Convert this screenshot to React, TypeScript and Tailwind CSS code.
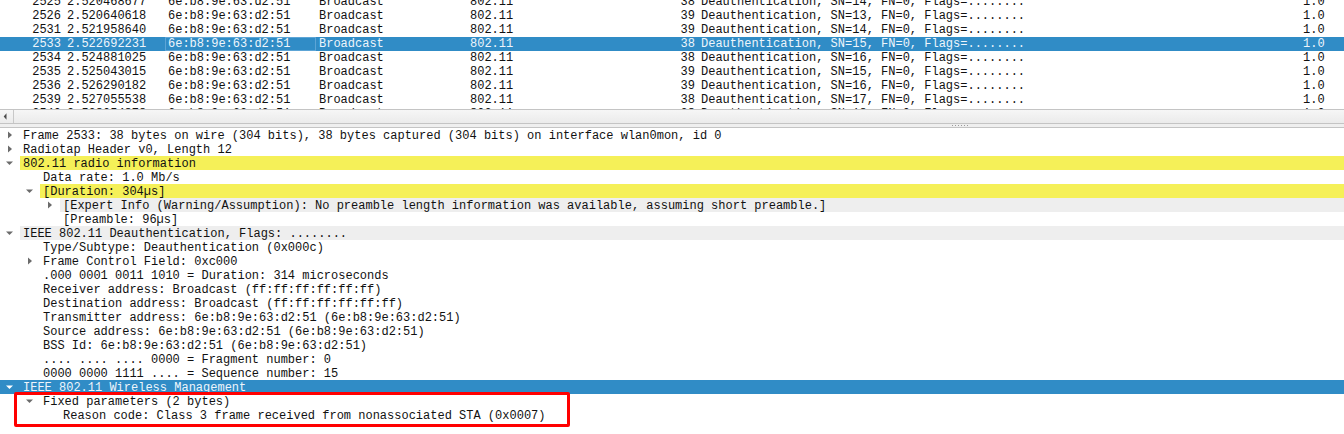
import React from "react";

type Pkt = { no: string; time: string; len: string; sn: number; sel?: boolean };

const packets: Pkt[] = [
  { no: "2525", time: "2.520468677", len: "38", sn: 14 },
  { no: "2526", time: "2.520640618", len: "39", sn: 13 },
  { no: "2531", time: "2.521958640", len: "39", sn: 14 },
  { no: "2533", time: "2.522692231", len: "38", sn: 15, sel: true },
  { no: "2534", time: "2.524881025", len: "38", sn: 16 },
  { no: "2535", time: "2.525043015", len: "39", sn: 15 },
  { no: "2536", time: "2.526290182", len: "39", sn: 16 },
  { no: "2539", time: "2.527055538", len: "38", sn: 17 },
  { no: "2540", time: "2.528054878", len: "38", sn: 18 },
];

type Line = {
  level: number;
  arrow?: "right" | "down";
  text: string;
  bg?: "yellow" | "gray" | "sel";
};

const lines: Line[] = [
  { level: 0, arrow: "right", text: "Frame 2533: 38 bytes on wire (304 bits), 38 bytes captured (304 bits) on interface wlan0mon, id 0" },
  { level: 0, arrow: "right", text: "Radiotap Header v0, Length 12" },
  { level: 0, arrow: "down", text: "802.11 radio information", bg: "yellow" },
  { level: 1, text: "Data rate: 1.0 Mb/s" },
  { level: 1, arrow: "down", text: "[Duration: 304\u00b5s]", bg: "yellow" },
  { level: 2, arrow: "right", text: "[Expert Info (Warning/Assumption): No preamble length information was available, assuming short preamble.]", bg: "gray" },
  { level: 2, text: "[Preamble: 96\u00b5s]" },
  { level: 0, arrow: "down", text: "IEEE 802.11 Deauthentication, Flags: ........", bg: "gray" },
  { level: 1, text: "Type/Subtype: Deauthentication (0x000c)" },
  { level: 1, arrow: "right", text: "Frame Control Field: 0xc000" },
  { level: 1, text: ".000 0001 0011 1010 = Duration: 314 microseconds" },
  { level: 1, text: "Receiver address: Broadcast (ff:ff:ff:ff:ff:ff)" },
  { level: 1, text: "Destination address: Broadcast (ff:ff:ff:ff:ff:ff)" },
  { level: 1, text: "Transmitter address: 6e:b8:9e:63:d2:51 (6e:b8:9e:63:d2:51)" },
  { level: 1, text: "Source address: 6e:b8:9e:63:d2:51 (6e:b8:9e:63:d2:51)" },
  { level: 1, text: "BSS Id: 6e:b8:9e:63:d2:51 (6e:b8:9e:63:d2:51)" },
  { level: 1, text: ".... .... .... 0000 = Fragment number: 0" },
  { level: 1, text: "0000 0000 1111 .... = Sequence number: 15" },
  { level: 0, arrow: "down", text: "IEEE 802.11 Wireless Management", bg: "sel" },
  { level: 1, arrow: "down", text: "Fixed parameters (2 bytes)" },
  { level: 2, text: "Reason code: Class 3 frame received from nonassociated STA (0x0007)" },
];

function Arrow({ dir, light }: { dir?: "right" | "down"; light?: boolean }) {
  const fill = light ? "#ffffff" : "#6b6b6b";
  return (
    <div className="w-[20px] h-[14px] shrink-0">
      {dir === "right" && (
        <svg width="20" height="14" viewBox="0 0 20 14">
          <polygon points="8,3.5 12,7 8,10.5" fill={fill} />
        </svg>
      )}
      {dir === "down" && (
        <svg width="20" height="14" viewBox="0 0 20 14">
          <polygon points="6,5.5 13,5.5 9.5,9" fill={fill} />
        </svg>
      )}
    </div>
  );
}

function PacketRow({ p }: { p: Pkt }) {
  return (
    <div
      className={
        p.sel
          ? "flex h-[14px] leading-[14px] whitespace-nowrap bg-[#308cc6] text-[#eef5fb]"
          : "flex h-[14px] leading-[14px] whitespace-nowrap text-[#111111]"
      }
    >
      <div className="w-[64px] shrink-0 text-right pr-[3px]">{p.no}</div>
      <div className="w-[101px] shrink-0 pl-[3px]">{p.time}</div>
      <div
        className={
          p.sel
            ? "w-[151px] shrink-0 pl-[2px] border border-[#5da5d6] leading-[12px]"
            : "w-[151px] shrink-0 pl-[3px]"
        }
      >
        6e:b8:9e:63:d2:51
      </div>
      <div className="w-[151px] shrink-0 pl-[3px]">Broadcast</div>
      <div className="w-[151px] shrink-0 pl-[3px]">802.11</div>
      <div className="w-[80px] shrink-0 text-right pr-[3px]">{p.len}</div>
      <div className="w-[602px] shrink-0 pl-[3px]">
        Deauthentication, SN={p.sn}, FN=0, Flags=........
      </div>
      <div className="flex-1 pl-[3px]">1.0</div>
    </div>
  );
}

function TreeRow({ l }: { l: Line }) {
  const sel = l.bg === "sel";
  const bgCls =
    l.bg === "yellow"
      ? "bg-[#f5f058]"
      : l.bg === "gray"
      ? "bg-[#eeeeee]"
      : "";
  return (
    <div
      className={
        sel
          ? "flex h-[14px] leading-[14px] whitespace-nowrap bg-[#308cc6] text-[#eef5fb]"
          : "flex h-[14px] leading-[14px] whitespace-nowrap text-[#111111]"
      }
    >
      {l.level > 0 && <div className="shrink-0" style={{ width: l.level * 20 }} />}
      <Arrow dir={l.arrow} light={sel} />
      <div className={"flex-1 pl-[3px] pt-[1px] " + bgCls}>{l.text}</div>
    </div>
  );
}

export default function App() {
  return (
    <div className="relative w-[1344px] h-[434px] overflow-hidden bg-white font-['Liberation_Mono',monospace] text-[12px]">
      {/* packet list */}
      <div className="h-[109px] overflow-hidden">
        <div className="-mt-[5px]">
          {packets.map((p) => (
            <PacketRow key={p.no} p={p} />
          ))}
        </div>
      </div>
      {/* horizontal scrollbar */}
      <div className="flex h-[14px] border-t border-[#c4c4c4] bg-gradient-to-b from-[#f6f6f6] to-[#ebebeb]">
        <div className="w-[14px] h-full border-r border-[#c8c8c8] flex items-center justify-center">
          <svg width="14" height="13" viewBox="0 0 14 13">
            <polygon points="7,3 7,10 4,6.5" fill="#4a4a4a" />
          </svg>
        </div>
        <div className="flex-1" />
      </div>
      {/* splitter */}
      <div className="h-[5px] border-t border-b border-[#c4c4c4] bg-[#efefef] flex items-center justify-end pr-[376px]">
        <div className="flex gap-[2px]">
          {[0, 1, 2, 3, 4, 5].map((i) => (
            <div key={i} className="w-[1px] h-[1px] bg-[#9a9a9a]" />
          ))}
        </div>
      </div>
      {/* detail tree */}
      <div>
        {lines.map((l, i) => (
          <TreeRow key={i} l={l} />
        ))}
      </div>
      {/* red annotation box */}
      <div className="absolute left-[14px] top-[392px] w-[556px] h-[35px] border-[3px] border-[#ff0000] rounded-[2px]" />
    </div>
  );
}
